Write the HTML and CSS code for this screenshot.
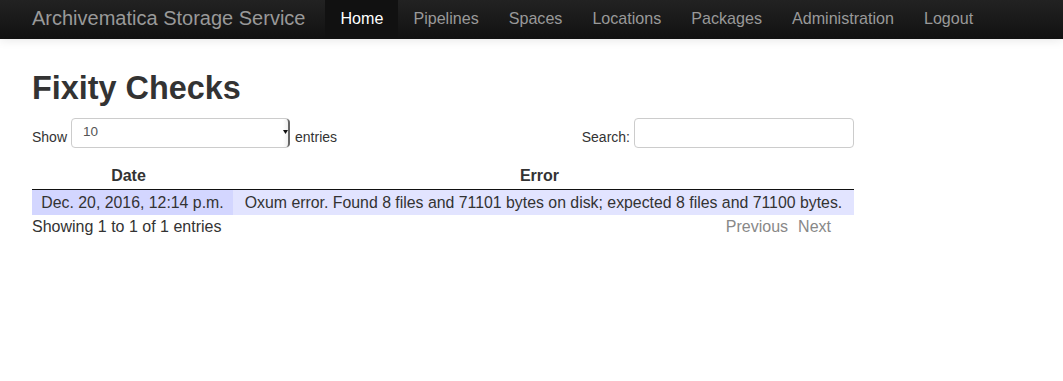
FILE: index.html
```html
<!DOCTYPE html>
<html lang="en">
<head>
<meta charset="utf-8">
<title>Fixity Checks - Archivematica Storage Service</title>
<link rel="stylesheet" href="styles.css">
</head>
<body>
<header class="navbar">
  <a class="brand" href="#">Archivematica Storage Service</a>
  <nav class="nav">
    <a class="nav-link active" href="#">Home</a>
    <a class="nav-link" href="#">Pipelines</a>
    <a class="nav-link" href="#">Spaces</a>
    <a class="nav-link" href="#">Locations</a>
    <a class="nav-link" href="#">Packages</a>
    <a class="nav-link" href="#">Administration</a>
    <a class="nav-link" href="#">Logout</a>
  </nav>
</header>
<main class="main">
  <h1 class="title">Fixity Checks</h1>
  <div class="dt-wrapper">
    <div class="dt-controls">
      <div class="dt-length">
        <span class="label">Show</span>
        <span class="select-wrap">
          <select class="select"><option>10</option><option>25</option><option>50</option><option>100</option></select>
          <span class="select-arrow"><svg width="5" height="4" viewBox="0 0 5 4"><path d="M0 0H5L2.5 4Z" fill="#111"/></svg></span>
        </span>
        <span class="label">entries</span>
      </div>
      <div class="dt-filter">
        <span class="label">Search:</span>
        <input class="search" type="text">
      </div>
    </div>
    <table class="dt-table">
      <colgroup><col class="col-date"><col class="col-error"></colgroup>
      <thead>
        <tr><th>Date</th><th>Error</th></tr>
      </thead>
      <tbody>
        <tr class="odd">
          <td class="sorted">Dec. 20, 2016, 12:14 p.m.</td>
          <td>Oxum error. Found 8 files and 71101 bytes on disk; expected 8 files and 71100 bytes.</td>
        </tr>
      </tbody>
    </table>
    <div class="dt-footer">
      <div class="dt-info">Showing 1 to 1 of 1 entries</div>
      <div class="dt-paging">
        <span class="page-prev">Previous</span>
        <span class="page-next">Next</span>
      </div>
    </div>
  </div>
</main>
</body>
</html>
```

FILE: styles.css
```css
html, body {
  margin: 0;
  padding: 0;
  background: #fff;
}
body {
  font-family: "Liberation Sans", Arial, Helvetica, sans-serif;
  color: #333;
  font-size: 16px;
}
a { text-decoration: none; }

.navbar {
  display: flex;
  align-items: stretch;
  height: 39px;
  background: linear-gradient(to bottom, #222 0%, #111 100%);
  box-shadow: 0 1px 10px rgba(0, 0, 0, 0.1);
  padding-left: 32px;
}
.brand {
  font-size: 20px;
  line-height: 37px;
  color: #999;
  margin-right: 20px;
}
.nav {
  display: flex;
}
.nav-link {
  display: block;
  padding: 0 15px;
  font-size: 16.1px;
  line-height: 37px;
  color: #999;
}
.nav-link.active {
  color: #fff;
  background: #111;
}

.main {
  padding: 0 32px;
}
.title {
  margin: 29px 0 10px;
  font-size: 32.4px;
  line-height: 40px;
  font-weight: bold;
  color: #333;
}

.dt-wrapper {
  width: 822px;
}
.dt-controls {
  display: flex;
  justify-content: space-between;
  height: 30px;
}
.dt-length, .dt-filter {
  display: flex;
  align-items: flex-end;
}
.label {
  font-size: 14px;
  line-height: 20px;
  margin-bottom: 1px;
}
.dt-length .label:first-child { margin-right: 4px; }
.dt-length .label:last-child { margin-left: 5px; }
.dt-filter .label { margin-right: 4px; }

.select-wrap {
  position: relative;
  display: block;
  height: 30px;
}
.select {
  -webkit-appearance: none;
  appearance: none;
  display: block;
  box-sizing: border-box;
  width: 219px;
  height: 30px;
  margin: 0;
  padding: 0 0 3px 11px;
  border: 1px solid #ccc;
  border-radius: 4px;
  background: #fff;
  font-family: "Liberation Sans", Arial, sans-serif;
  font-size: 13.5px;
  color: #555;
}
.select-arrow {
  position: absolute;
  right: 0;
  top: 1px;
  bottom: 1px;
  width: 7px;
  display: flex;
  align-items: center;
  justify-content: flex-start;
  border-right: 2px solid #666;
  border-radius: 0 4px 4px 0;
  background: linear-gradient(to right, #fff 0%, #f0f0f0 100%);
  box-sizing: border-box;
}
.select-arrow svg { display: block; margin-top: -2px; }

.search {
  box-sizing: border-box;
  width: 220px;
  height: 30px;
  margin: 0;
  padding: 4px 6px;
  border: 1px solid #ccc;
  border-radius: 4px;
  font-family: inherit;
  font-size: 14px;
}

.dt-table {
  margin-top: 15px;
  width: 822px;
  table-layout: fixed;
  border-collapse: collapse;
  border-spacing: 0;
}
.col-date { width: 201px; }
.col-error { width: 621px; }
.dt-table th {
  font-weight: bold;
  text-align: center;
  padding: 3px 18px 3px 10px;
  line-height: 20px;
  border-bottom: 1px solid #111;
}
.dt-table td {
  padding: 3px 0;
  font-size: 15.85px;
  line-height: 19px;
  text-align: center;
  white-space: nowrap;
}
.dt-table tr.odd { background: #e2e4ff; }
.dt-table tr.odd td.sorted { background: #d3d6ff; }

.dt-footer {
  display: flex;
  justify-content: space-between;
  line-height: 20px;
  padding-top: 2px;
}
.dt-paging {
  display: flex;
  gap: 10px;
  padding-right: 23px;
  color: #888;
}
```
